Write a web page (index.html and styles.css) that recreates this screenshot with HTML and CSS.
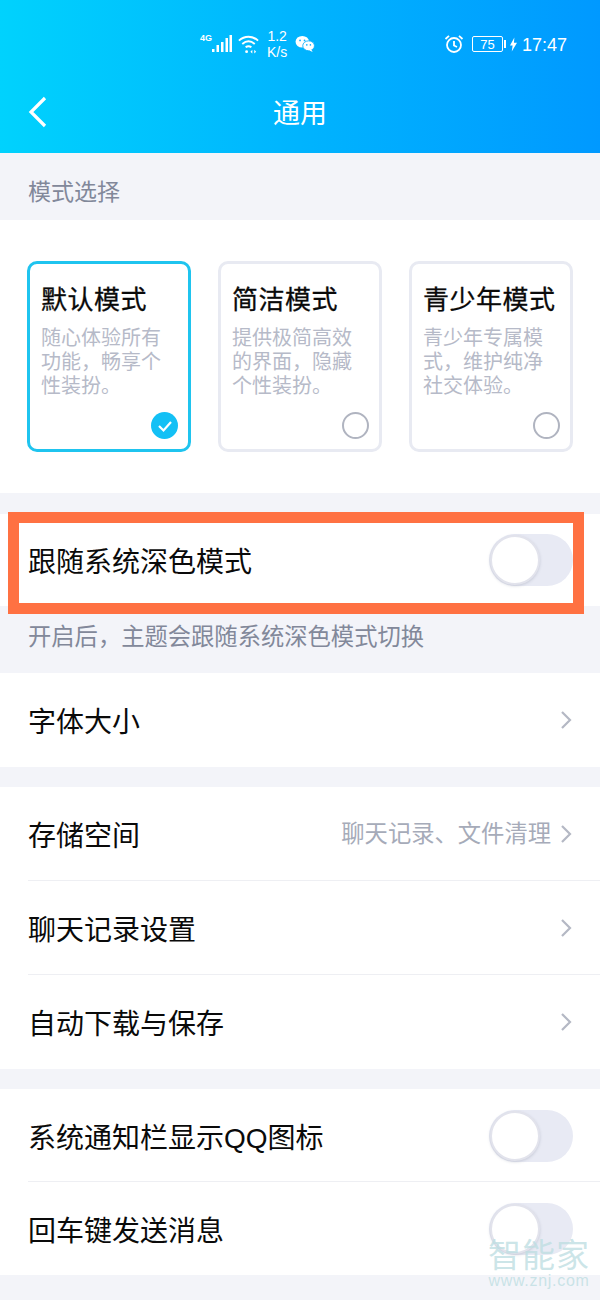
FILE: index.html
```html
<!DOCTYPE html>
<html lang="zh-CN">
<head>
    <meta charset="UTF-8">
    <meta name="viewport" content="width=device-width, initial-scale=1.0">
    <title>通用</title>
    <link rel="stylesheet" href="styles.css">
</head>
<body>
    <div class="page">
        <!-- Header -->
        <header class="header">
            <div class="status-bar">
                <div class="status-left">
                    <span class="net-label">4G</span>
                    <svg class="icon-signal" width="20" height="20" viewBox="0 0 20 20" fill="#fff">
                        <rect x="0" y="15" width="2.500" height="3"/>
                        <rect x="4.500" y="11" width="2.500" height="7"/>
                        <rect x="9" y="8" width="2.500" height="10"/>
                        <rect x="13.500" y="4" width="2.500" height="14"/>
                        <rect x="17.500" y="1" width="2.500" height="17"/>
                    </svg>
                    <svg class="icon-wifi" width="23" height="22" viewBox="0 0 24 22" fill="none" stroke="#fff" stroke-width="2">
                        <path d="M2 7.500C8 2 16 2 22 7.500"/>
                        <path d="M5.500 11C9.500 7.500 14.500 7.500 18.500 11"/>
                        <path d="M9 14.500C11 13 13 13 15 14.500"/>
                        <circle cx="10" cy="19" r="1.500" fill="#fff" stroke="none"/>
                        <path d="M16 17v4l-2-2zM18 17v4l2-2z" fill="#fff" stroke="none"/>
                    </svg>
                    <span class="speed">1.2<br>K/s</span>
                    <svg class="icon-wechat" width="20" height="18" viewBox="0 0 22 20" fill="#fff">
                        <ellipse cx="8" cy="7.500" rx="7.500" ry="6.500"/>
                        <ellipse cx="15" cy="12" rx="6.500" ry="5.500" stroke="#0fb0fd" stroke-width="1"/>
                        <path d="M18 16l1.500 3-4-2z"/>
                        <circle cx="5.500" cy="6" r="1" fill="#0fb0fd"/>
                        <circle cx="10.500" cy="6" r="1" fill="#0fb0fd"/>
                        <circle cx="13" cy="11" r=".9" fill="#0fb0fd"/>
                        <circle cx="17" cy="11" r=".9" fill="#0fb0fd"/>
                    </svg>
                </div>
                <div class="status-right">
                    <svg class="icon-alarm" width="20" height="20" viewBox="0 0 20 20" fill="none" stroke="#fff" stroke-width="1.800">
                        <circle cx="10" cy="11" r="7"/>
                        <path d="M10 7v4.500l3 1.500"/>
                        <path d="M1.500 5L5 1.800M18.500 5L15 1.800"/>
                    </svg>
                    <span class="battery"><span class="battery-level">75</span></span>
                    <span class="battery-tip"></span>
                    <svg class="icon-bolt" width="7" height="15" viewBox="0 0 8 16" fill="#fff">
                        <path d="M5 0L0 9h3l-1 7 6-10H4.500z"/>
                    </svg>
                    <span class="clock">17:47</span>
                </div>
            </div>
            <div class="nav-bar">
                <svg class="icon-back" width="20" height="32" viewBox="0 0 20 32" fill="none" stroke="#fff" stroke-width="3.200">
                    <path d="M17 2L3 16l14 14"/>
                </svg>
                <h1 class="nav-title">通用</h1>
            </div>
        </header>

        <!-- Mode select -->
        <div class="section-label">模式选择</div>
        <section class="mode-panel">
            <div class="mode-card mode-card-active">
                <div class="mode-name">默认模式</div>
                <div class="mode-desc">随心体验所有功能，畅享个性装扮。</div>
                <span class="mode-check">
                    <svg width="16" height="14" viewBox="0 0 16 14" fill="none" stroke="#fff" stroke-width="2.200">
                        <path d="M2 7l4.500 4.500L14 3"/>
                    </svg>
                </span>
            </div>
            <div class="mode-card">
                <div class="mode-name">简洁模式</div>
                <div class="mode-desc">提供极简高效的界面，隐藏个性装扮。</div>
                <span class="mode-radio"></span>
            </div>
            <div class="mode-card">
                <div class="mode-name">青少年模式</div>
                <div class="mode-desc">青少年专属模式，维护纯净社交体验。</div>
                <span class="mode-radio"></span>
            </div>
        </section>

        <!-- Dark mode row -->
        <section class="group group-dark">
            <div class="row row-dark">
                <span class="row-title">跟随系统深色模式</span>
                <span class="switch"><span class="switch-knob"></span></span>
            </div>
            <div class="highlight-frame"></div>
        </section>
        <div class="hint">开启后，主题会跟随系统深色模式切换</div>

        <section class="group">
            <div class="row">
                <span class="row-title">字体大小</span>
                <svg class="chevron" width="12" height="20" viewBox="0 0 12 20" fill="none" stroke="#b4b8c4" stroke-width="2.200"><path d="M2 2l8 8-8 8"/></svg>
            </div>
        </section>

        <section class="group group-gap">
            <div class="row row-line">
                <span class="row-title">存储空间</span>
                <span class="row-value">聊天记录、文件清理</span>
                <svg class="chevron" width="12" height="20" viewBox="0 0 12 20" fill="none" stroke="#b4b8c4" stroke-width="2.200"><path d="M2 2l8 8-8 8"/></svg>
            </div>
            <div class="row row-line">
                <span class="row-title">聊天记录设置</span>
                <svg class="chevron" width="12" height="20" viewBox="0 0 12 20" fill="none" stroke="#b4b8c4" stroke-width="2.200"><path d="M2 2l8 8-8 8"/></svg>
            </div>
            <div class="row">
                <span class="row-title">自动下载与保存</span>
                <svg class="chevron" width="12" height="20" viewBox="0 0 12 20" fill="none" stroke="#b4b8c4" stroke-width="2.200"><path d="M2 2l8 8-8 8"/></svg>
            </div>
        </section>

        <section class="group group-gap">
            <div class="row row-line row-short">
                <span class="row-title">系统通知栏显示QQ图标</span>
                <span class="switch"><span class="switch-knob"></span></span>
            </div>
            <div class="row row-short">
                <span class="row-title">回车键发送消息</span>
                <span class="switch"><span class="switch-knob"></span></span>
            </div>
        </section>

        <!-- Watermark -->
        <div class="watermark">
            <div class="watermark-name">智能家</div>
            <div class="watermark-url">www.znj.com</div>
        </div>
    </div>
</body>
</html>
```

FILE: styles.css
```css
* {
    box-sizing: border-box;
}

body {
    margin: 0;
    background-color: #f3f4f9;
    font-family: "Liberation Sans", "Noto Sans CJK SC", sans-serif;
    color: #0a0a0a;
}

.page {
    position: relative;
    width: 600px;
    height: 1300px;
    overflow: hidden;
    background-color: #f3f4f9;
}

/* Header */
.header {
    height: 153px;
    background: linear-gradient(90deg, #00d2fd 0%, #00b4fe 50%, #0099ff 100%);
    color: white;
}

.status-bar {
    display: flex;
    height: 78px;
    padding: 28px 33px 0 200px;
    justify-content: space-between;
    align-items: flex-start;
}

.status-left,
.status-right {
    display: flex;
    align-items: center;
    height: 32px;
}

.net-label {
    font-size: 9px;
    font-weight: bold;
    margin: -12px 0 0 0;
}

.icon-signal {
    margin-right: 5px;
}

.speed {
    font-size: 14px;
    line-height: 16px;
    text-align: center;
    margin: 0 8px 0 7px;
}

.icon-alarm {
    margin-right: 8px;
}

.battery {
    display: flex;
    align-items: center;
    justify-content: center;
    width: 31px;
    height: 16px;
    border: 1px solid #fff;
    border-radius: 2px;
}

.battery-level {
    font-size: 13px;
}

.battery-tip {
    width: 2px;
    height: 8px;
    margin: 0 4px 0 1px;
    background-color: white;
}

.icon-bolt {
    margin-right: 5px;
}

.clock {
    font-size: 18px;
    position: relative;
    top: 1px;
}

.nav-bar {
    display: flex;
    position: relative;
    height: 70px;
    align-items: center;
    justify-content: center;
    padding-bottom: 4px;
}

.icon-back {
    position: absolute;
    left: 28px;
    top: 18px;
}

.nav-title {
    margin: 0;
    font-size: 27px;
    font-weight: normal;
}

/* Mode select */
.section-label {
    display: flex;
    height: 67px;
    padding: 6px 0 0 28px;
    align-items: center;
    font-size: 23px;
    color: #82889a;
}

.mode-panel {
    display: flex;
    height: 273px;
    padding: 41px 27px 0;
    gap: 27px;
    background-color: white;
}

.mode-card {
    position: relative;
    width: 164px;
    height: 191px;
    padding: 20px 22px 0 11px;
    border: 3px solid #e8eaf2;
    border-radius: 10px;
}

.mode-card-active {
    border-color: #1fc4ef;
}

.mode-name {
    font-size: 26px;
    line-height: 32px;
    white-space: nowrap;
    letter-spacing: 0.5px;
    -webkit-text-stroke: 0.3px #0a0a0a;
}

.mode-desc {
    margin-top: 10px;
    font-size: 20px;
    line-height: 24px;
    color: #b6bac8;
}

.mode-check,
.mode-radio {
    position: absolute;
    right: 10px;
    bottom: 10px;
    width: 27px;
    height: 27px;
    border-radius: 50%;
}

.mode-check {
    display: flex;
    align-items: center;
    justify-content: center;
    background-color: #13c0f5;
}

.mode-radio {
    border: 2px solid #b0b4c0;
}

/* Rows */
.group {
    background-color: white;
}

.group-dark {
    position: relative;
    margin-top: 21px;
}

.group-gap {
    margin-top: 20px;
}

.row {
    display: flex;
    position: relative;
    height: 94px;
    padding: 0 28px;
    align-items: center;
}

.row-dark {
    height: 92px;
}

.row-short {
    height: 93px;
}

.row-line::after {
    content: "";
    position: absolute;
    left: 28px;
    right: 0;
    bottom: 0;
    height: 1px;
    background-color: #eeeff3;
}

.row-title {
    flex: 1;
    font-size: 28px;
}

.row-value {
    margin: 0 9px 5px 0;
    font-size: 23.300px;
    color: #a6abb9;
}

.chevron {
    display: block;
}

.switch {
    display: block;
    position: relative;
    width: 84px;
    height: 52px;
    margin-right: -1px;
    border-radius: 26px;
    background-color: #e8eaf4;
}

.switch-knob {
    position: absolute;
    left: 1px;
    top: 1px;
    width: 50px;
    height: 50px;
    border: 2px solid #e2e3ec;
    border-radius: 50%;
    background-color: white;
    box-shadow: 0 1px 3px rgba(120, 125, 150, 0.3);
}

.highlight-frame {
    position: absolute;
    left: 8px;
    top: -2px;
    width: 576px;
    height: 102px;
    border: 11px solid #ff7142;
}

.hint {
    display: flex;
    height: 67px;
    padding-bottom: 9px;
    padding-left: 28px;
    align-items: center;
    font-size: 23.300px;
    color: #82889a;
}

/* Watermark */
.watermark {
    position: absolute;
    right: 10px;
    bottom: 9px;
    text-align: center;
    color: rgba(190, 222, 226, 0.8);
}

.watermark-name {
    font-size: 33px;
    line-height: 30px;
    letter-spacing: 1px;
}

.watermark-url {
    font-size: 16px;
    line-height: 20px;
    letter-spacing: 0.700px;
}
```
